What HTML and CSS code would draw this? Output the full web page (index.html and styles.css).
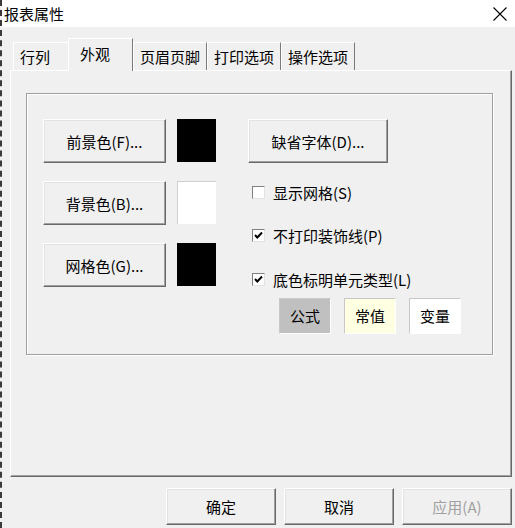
FILE: index.html
```html
<!DOCTYPE html>
<html lang="zh-CN">
<head>
  <meta charset="UTF-8">
  <meta name="viewport" content="width=device-width, initial-scale=1.0">
  <title>报表属性</title>
  <link rel="stylesheet" href="styles.css">
</head>
<body>
  <div class="window">
    <div class="titlebar">
      <span class="title">报表属性</span>
      <svg class="close" width="14" height="14" viewBox="0 0 14 14">
        <path d="M0.5 0.5 L13.5 13.5 M13.5 0.5 L0.5 13.5" stroke="#000" stroke-width="1.1" fill="none"/>
      </svg>
    </div>

    <div class="client">
      <div class="tabs">
        <div class="tab tab-first">行列</div>
        <div class="tab active">外观</div>
        <div class="tab">页眉页脚</div>
        <div class="tab">打印选项</div>
        <div class="tab">操作选项</div>
      </div>

      <div class="page">
        <div class="group">
          <!-- 颜色按钮 -->
          <div class="col-left">
            <div class="color-row">
              <button class="btn btn-color">前景色(F)...</button>
              <span class="swatch swatch-black"></span>
            </div>
            <div class="color-row">
              <button class="btn btn-color">背景色(B)...</button>
              <span class="swatch swatch-white"></span>
            </div>
            <div class="color-row">
              <button class="btn btn-color">网格色(G)...</button>
              <span class="swatch swatch-black"></span>
            </div>
          </div>

          <!-- 选项 -->
          <div class="col-right">
            <button class="btn btn-font">缺省字体(D)...</button>
            <label class="check check-1">
              <span class="box"></span>显示网格(S)
            </label>
            <label class="check check-2">
              <span class="box">
                <svg width="11" height="11" viewBox="0 0 11 11"><polyline points="2,5 4.3,7.5 9,2.5" stroke="#000" stroke-width="2" fill="none"/></svg>
              </span>不打印装饰线(P)
            </label>
            <label class="check check-3">
              <span class="box">
                <svg width="11" height="11" viewBox="0 0 11 11"><polyline points="2,5 4.3,7.5 9,2.5" stroke="#000" stroke-width="2" fill="none"/></svg>
              </span>底色标明单元类型(L)
            </label>
            <div class="chips">
              <span class="chip chip-formula">公式</span>
              <span class="chip chip-const">常值</span>
              <span class="chip chip-var">变量</span>
            </div>
          </div>
        </div>
      </div>

      <div class="footer">
        <button class="btn btn-footer">确定</button>
        <button class="btn btn-footer">取消</button>
        <button class="btn btn-footer disabled">应用(A)</button>
      </div>
    </div>
  </div>
</body>
</html>
```

FILE: styles.css
```css
body {
  margin: 0;
  padding: 0;
  background: #f0f0f0;
  font-family: "Noto Sans CJK SC", "Noto Sans", sans-serif;
  font-size: 15px;
  color: #000;
}
.window {
  width: 515px;
  height: 528px;
  box-sizing: border-box;
  border-left: 2px dashed #3a3a3a;
  background: #f0f0f0;
  overflow: hidden;
}
.titlebar {
  height: 27px;
  background: #fff;
  display: flex;
  align-items: center;
  justify-content: space-between;
  padding: 0 8px 0 2px;
}
.title {
  font-size: 15px;
  line-height: 27px;
}
.close {
  display: block;
}

/* 选项卡 */
.tabs {
  display: flex;
  align-items: flex-end;
  height: 32px;
  margin: 11px 0 0 11px;
  position: relative;
  z-index: 1;
}
.tab {
  height: 28px;
  line-height: 28px;
  padding: 0 6px;
  border-top: 1px solid #fff;
  border-left: 1px solid #fff;
  border-right: 1px solid #7a7a7a;
  box-sizing: border-box;
  white-space: nowrap;
}
.tab-first {
  padding-right: 19px;
}
.tab.active {
  height: 33px;
  line-height: 29px;
  margin: 0 0 -1px -2px;
  padding: 0 22px 4px 11px;
  background: #f0f0f0;
}

.page {
  margin: 0 3px 0 8px;
  height: 407px;
  box-sizing: border-box;
  border-top: 1px solid #fff;
  border-left: 1px solid #fff;
  border-right: 1px solid #696969;
  border-bottom: 1px solid #696969;
  box-shadow: inset -1px -1px 0 #a0a0a0;
  padding: 22px 0 0 15px;
}
.group {
  width: 467px;
  height: 262px;
  box-sizing: border-box;
  border: 1px solid #a0a0a0;
  box-shadow: 1px 1px 0 #fff, inset 1px 1px 0 #fff;
  padding: 25px 0 0 16px;
  display: flex;
  gap: 32px;
}

/* 按钮 */
.btn {
  font-family: inherit;
  font-size: 15px;
  color: #000;
  background: #f0f0f0;
  border: 1px solid;
  border-color: #fff #696969 #696969 #fff;
  box-shadow: inset -1px -1px 0 #a0a0a0, inset 1px 1px 0 #e3e3e3;
  padding: 0;
  box-sizing: border-box;
}
.btn.disabled {
  color: #a0a0a0;
}

.col-left {
  display: flex;
  flex-direction: column;
  gap: 18px;
}
.color-row {
  display: flex;
  align-items: flex-start;
  gap: 11px;
}
.btn-color {
  width: 123px;
  height: 44px;
}
.swatch {
  width: 39px;
  height: 43px;
  box-sizing: border-box;
}
.swatch-black {
  background: #000;
}
.swatch-white {
  background: #fff;
  border-top: 1px solid #d0d0d0;
  border-left: 1px solid #d0d0d0;
}

.col-right {
  display: flex;
  flex-direction: column;
  align-items: flex-start;
}
.btn-font {
  width: 140px;
  height: 44px;
}
.check {
  display: flex;
  align-items: center;
  height: 20px;
  padding-left: 4px;
}
.check-1 {
  margin-top: 19px;
}
.check-2 {
  margin-top: 23px;
}
.check-3 {
  margin-top: 24px;
}
.box {
  width: 13px;
  height: 13px;
  box-sizing: border-box;
  background: #fff;
  border: 1px solid;
  border-color: #808080 #e3e3e3 #e3e3e3 #808080;
  margin-right: 8px;
  display: flex;
  align-items: center;
  justify-content: center;
}
.box svg {
  display: block;
}

.chips {
  display: flex;
  gap: 13px;
  margin: 9px 0 0 31px;
}
.chip {
  width: 52px;
  height: 36px;
  line-height: 34px;
  text-align: center;
  box-sizing: border-box;
  border: 1px solid;
  border-color: #c8c8c8 #fff #fff #c8c8c8;
}
.chip-formula {
  background: #c0c0c0;
}
.chip-const {
  background: #ffffe1;
}
.chip-var {
  background: #fff;
}

.footer {
  display: flex;
  justify-content: flex-end;
  gap: 8px;
  margin: 11px 3px 0 0;
}
.btn-footer {
  width: 110px;
  height: 37px;
}
```
